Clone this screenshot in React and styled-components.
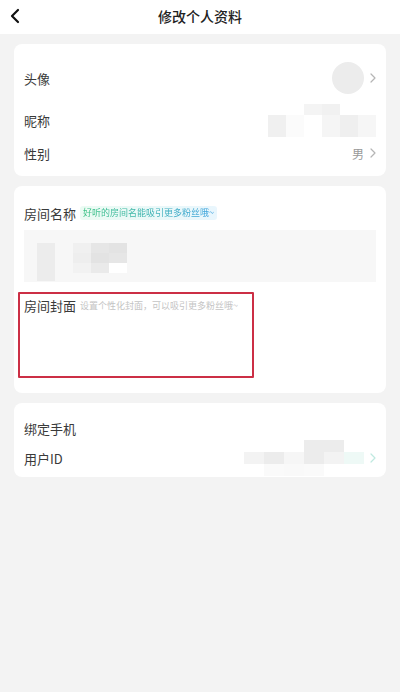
import React from "react";
import styled, { createGlobalStyle } from "styled-components";

const GlobalStyle = createGlobalStyle`
  html, body {
    margin: 0;
    padding: 0;
    background: #f3f3f3;
    font-family: "Noto Sans CJK SC", "Noto Sans", sans-serif;
  }
`;

const Page = styled.div`
  width: 400px;
  min-height: 692px;
  background: #f3f3f3;
`;

const Header = styled.div`
  position: relative;
  height: 34px;
  background: #fff;
  display: flex;
  align-items: center;
  justify-content: center;
`;

const Back = styled.svg`
  position: absolute;
  left: 9px;
  top: 8px;
`;

const Title = styled.div`
  font-size: 14px;
  font-weight: 500;
  color: #222;
  margin-top: -2px;
`;

const Body = styled.div`
  padding: 10px 14px 0;
  display: flex;
  flex-direction: column;
  gap: 10px;
`;

const Card = styled.div`
  position: relative;
  background: #fff;
  border-radius: 8px;
  padding: ${({ $pad }) => $pad || "12px 10px 10px"};
`;

const Row = styled.div`
  height: ${({ $h }) => $h}px;
  display: flex;
  align-items: center;
  justify-content: space-between;
`;

const Label = styled.span`
  font-size: 13px;
  color: #3a3a3a;
`;

const Right = styled.div`
  display: flex;
  align-items: center;
  gap: 6px;
`;

const Value = styled.span`
  font-size: 12px;
  color: #999;
`;

const Avatar = styled.div`
  width: 32px;
  height: 32px;
  border-radius: 50%;
  background: #ececec;
`;

const LabelLine = styled.div`
  display: flex;
  align-items: center;
  gap: 4px;
  height: 30px;
`;

const Pill = styled.span`
  font-size: 9px;
  line-height: 14px;
  padding: 0 3px;
  border-radius: 3px;
  background: linear-gradient(90deg, #ebfbf3, #e9f6fd);
`;

const PillText = styled.span`
  background: linear-gradient(90deg, #35c07f, #3aa0e0);
  -webkit-background-clip: text;
  background-clip: text;
  color: transparent;
`;

const Hint = styled.span`
  font-size: 9px;
  color: #c4c4c4;
`;

const InputBox = styled.div`
  margin-top: 2px;
  height: 52px;
  background: #f7f7f7;
  display: flex;
  align-items: flex-start;
  padding: 13px 0 0 13px;
  box-sizing: border-box;
  gap: 18px;
`;

const CoverArea = styled.div`
  height: 89px;
  padding-top: 8px;
`;

const Mark = styled.div`
  position: absolute;
  left: 4px;
  top: 106px;
  width: 236px;
  height: 86px;
  border: 2px solid #cc2f45;
  box-sizing: border-box;
  border-radius: 1px;
`;

const Mosaic = styled.div`
  display: grid;
  grid-template-columns: repeat(${({ $cols }) => $cols}, ${({ $cell }) => $cell}px);
  grid-auto-rows: ${({ $row }) => $row}px;
`;

const Cell = styled.div`
  background: ${({ $c }) => $c};
`;

const Chevron = ({ color = "#b5b5b5" }) => (
  <svg width="6" height="10" viewBox="0 0 6 10">
    <path d="M1 1l4 4-4 4" fill="none" stroke={color} strokeWidth="1.2" strokeLinecap="round" strokeLinejoin="round" />
  </svg>
);

const Blur = ({ cols, cell, row, shades }) => (
  <Mosaic $cols={cols} $cell={cell} $row={row}>
    {shades.map((c, i) => (
      <Cell key={i} $c={c} />
    ))}
  </Mosaic>
);

const nick = [
  "#fff", "#fff", "#f4f4f4", "#f1f1f1", "#fff", "#fff",
  "#f0f0f0", "#fbfbfb", "#fff", "#f5f5f5", "#efefef", "#f6f6f6",
  "#f0f0f0", "#fbfbfb", "#fff", "#f5f5f5", "#efefef", "#f6f6f6",
];

const roomA = ["#ececec", "#ececec"];
const roomB = [
  "#f0f0f0", "#e6e6e6", "#e3e3e3",
  "#eeeeee", "#e3e3e3", "#e6e6e6",
  "#f2f2f2", "#eaeaea", "#fff",
];

const phone = [
  "#fff", "#fff", "#fff", "#ececec", "#ececec", "#fff",
  "#f3f3f3", "#ececec", "#f6f6f6", "#ececec", "#f3f3f3", "#eef9f6",
  "#fff", "#fafafa", "#f9f9f9", "#fafafa", "#fff", "#fff",
];

export default function App() {
  return (
    <Page>
      <GlobalStyle />
      <Header>
        <Back width="12" height="16" viewBox="0 0 12 16">
          <path d="M9 2L3 8l6 6" fill="none" stroke="#111" strokeWidth="2.2" strokeLinecap="round" strokeLinejoin="round" />
        </Back>
        <Title>修改个人资料</Title>
      </Header>

      <Body>
        <Card>
          <Row $h={44}>
            <Label>头像</Label>
            <Right>
              <Avatar />
              <Chevron />
            </Right>
          </Row>
          <Row $h={40}>
            <Label>昵称</Label>
            <Blur cols={6} cell={18} row={11} shades={nick} />
          </Row>
          <Row $h={26}>
            <Label>性别</Label>
            <Right>
              <Value>男</Value>
              <Chevron />
            </Right>
          </Row>
        </Card>

        <Card $pad="12px 10px 14px">
          <LabelLine>
            <Label>房间名称</Label>
            <Pill>
              <PillText>好听的房间名能吸引更多粉丝哦~</PillText>
            </Pill>
          </LabelLine>
          <InputBox>
            <Blur cols={1} cell={18} row={19} shades={roomA} />
            <Blur cols={3} cell={18} row={10} shades={roomB} />
          </InputBox>
          <CoverArea>
            <LabelLine>
              <Label>房间封面</Label>
              <Hint>设置个性化封面，可以吸引更多粉丝哦~</Hint>
            </LabelLine>
          </CoverArea>
          <Mark />
        </Card>

        <Card $pad="10px 10px 4px">
          <Row $h={30}>
            <Label>绑定手机</Label>
          </Row>
          <Row $h={30}>
            <Label>用户ID</Label>
            <Right>
              <Blur cols={6} cell={20} row={12} shades={phone} />
              <Chevron color="#bfe9e0" />
            </Right>
          </Row>
        </Card>
      </Body>
    </Page>
  );
}
